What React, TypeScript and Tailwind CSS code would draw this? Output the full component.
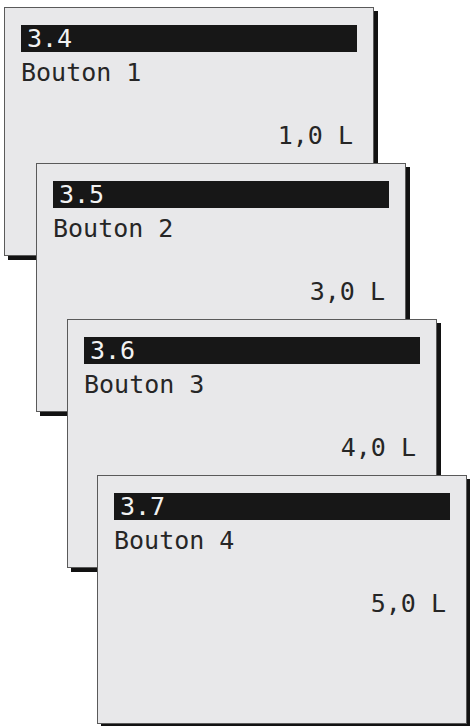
const screens = [
  { code: "3.4", label: "Bouton 1", value: "1,0 L", offset: "ml-[4px]" },
  { code: "3.5", label: "Bouton 2", value: "3,0 L", offset: "ml-[36px]" },
  { code: "3.6", label: "Bouton 3", value: "4,0 L", offset: "ml-[67px]" },
  { code: "3.7", label: "Bouton 4", value: "5,0 L", offset: "ml-[97px]" },
];

// One LCD screen: inverted title bar, label, and the volume right-aligned.
function Screen({ code, label, value, offset, first }: (typeof screens)[number] & { first: boolean }) {
  return (
    <div
      className={`${offset} ${first ? "" : "-mt-[93px]"} relative h-[249px] w-[370px] border border-[#5a5a5a] bg-[#e8e8ea] px-[16px] pt-[17px] shadow-[4px_4px_0_#121212]`}
    >
      <div className="h-[27px] bg-[#171717] pl-[6px] text-[25px] leading-[27px] text-[#f2f2f2]">{code}</div>
      <div className="mt-[6px] text-[25px] leading-[29px] text-[#262626]">{label}</div>
      <div className="mt-[34px] pr-[4px] text-right text-[25px] leading-[29px] text-[#262626] slashed-zero">
        {value}
      </div>
    </div>
  );
}

export default function App() {
  return (
    <div
      className="h-[726px] w-[470px] overflow-hidden bg-white pt-[7px]"
      style={{ fontFamily: '"DejaVu Sans Mono", "Liberation Mono", monospace' }}
    >
      {screens.map((s, i) => (
        <Screen key={s.code} {...s} first={i === 0} />
      ))}
    </div>
  );
}
